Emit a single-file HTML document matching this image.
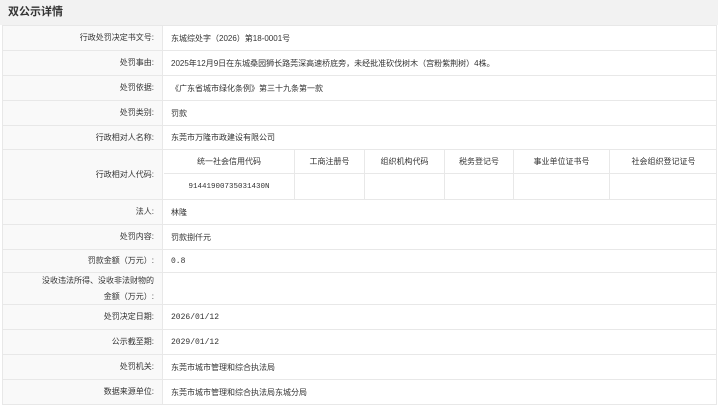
<!DOCTYPE html>
<html><head><meta charset="utf-8"><style>
*{margin:0;padding:0;box-sizing:border-box}
body{width:719px;height:406px;background:#fff;font-family:"Liberation Sans","Noto Sans CJK SC",sans-serif;font-size:8px;color:#333;position:relative;overflow:hidden}
.hd{position:absolute;left:0;top:0;width:718px;height:25px;background:#f2f2f2;font-size:11px;font-weight:bold;line-height:25px;padding-left:8px;color:#333}
.r{position:absolute;left:2px;width:715px;border-bottom:1px solid #e8e8e8;border-left:1px solid #e8e8e8;border-right:1px solid #e8e8e8}
.l{position:absolute;left:0;top:0;bottom:0;width:160px;background:#f9f9f9;border-right:1px solid #e8e8e8;text-align:right;padding-right:8px;display:flex;align-items:center;justify-content:flex-end;line-height:16px}
.v{position:absolute;left:168px;top:0;bottom:0;display:flex;align-items:center;white-space:nowrap}
.c{position:absolute;display:flex;align-items:center;justify-content:center;border-right:1px solid #e8e8e8;border-bottom:1px solid #e8e8e8;white-space:nowrap}
</style></head><body>
<div class="hd">双公示详情</div>
<div class="r" style="top:25px;height:26px;border-top:1px solid #e8e8e8"><div class="l">行政处罚决定书文号:</div><div class="v">东城综处字（2026）第18-0001号</div></div>
<div class="r" style="top:51px;height:25px"><div class="l">处罚事由:</div><div class="v">2025年12月9日在东城桑园狮长路莞深高速桥底旁，未经批准砍伐树木（宫粉紫荆树）4株。</div></div>
<div class="r" style="top:76px;height:25px"><div class="l">处罚依据:</div><div class="v">《广东省城市绿化条例》第三十九条第一款</div></div>
<div class="r" style="top:101px;height:25px"><div class="l">处罚类别:</div><div class="v">罚款</div></div>
<div class="r" style="top:126px;height:24px"><div class="l">行政相对人名称:</div><div class="v">东莞市万隆市政建设有限公司</div></div>
<div class="r" style="top:150px;height:50px"><div class="l">行政相对人代码:</div>
<div class="c" style="left:161px;top:0;width:131px;height:24px">统一社会信用代码</div>
<div class="c" style="left:292px;top:0;width:70px;height:24px">工商注册号</div>
<div class="c" style="left:362px;top:0;width:80px;height:24px">组织机构代码</div>
<div class="c" style="left:442px;top:0;width:69px;height:24px">税务登记号</div>
<div class="c" style="left:511px;top:0;width:96px;height:24px">事业单位证书号</div>
<div class="c" style="left:607px;top:0;width:107px;height:24px;border-right:none">社会组织登记证号</div>
<div class="c" style="left:161px;top:24px;width:131px;height:25px;border-bottom:none;font-family:'Liberation Mono',monospace;font-size:7.5px">91441900735031430N</div>
<div class="c" style="left:292px;top:24px;width:70px;height:25px;border-bottom:none"></div>
<div class="c" style="left:362px;top:24px;width:80px;height:25px;border-bottom:none"></div>
<div class="c" style="left:442px;top:24px;width:69px;height:25px;border-bottom:none"></div>
<div class="c" style="left:511px;top:24px;width:96px;height:25px;border-bottom:none"></div>
</div>
<div class="r" style="top:200px;height:25px"><div class="l">法人:</div><div class="v">林隆</div></div>
<div class="r" style="top:225px;height:25px"><div class="l">处罚内容:</div><div class="v">罚款捌仟元</div></div>
<div class="r" style="top:250px;height:23px"><div class="l">罚款金额（万元）:</div><div class="v" style="font-family:'Liberation Mono',monospace">0.8</div></div>
<div class="r" style="top:273px;height:32px"><div class="l">没收违法所得、没收非法财物的<br>金额（万元）:</div><div class="v"></div></div>
<div class="r" style="top:305px;height:25px"><div class="l">处罚决定日期:</div><div class="v" style="font-family:'Liberation Mono',monospace">2026/01/12</div></div>
<div class="r" style="top:330px;height:25px"><div class="l">公示截至期:</div><div class="v" style="font-family:'Liberation Mono',monospace">2029/01/12</div></div>
<div class="r" style="top:355px;height:25px"><div class="l">处罚机关:</div><div class="v">东莞市城市管理和综合执法局</div></div>
<div class="r" style="top:380px;height:25px"><div class="l">数据来源单位:</div><div class="v">东莞市城市管理和综合执法局东城分局</div></div>
</body></html>
